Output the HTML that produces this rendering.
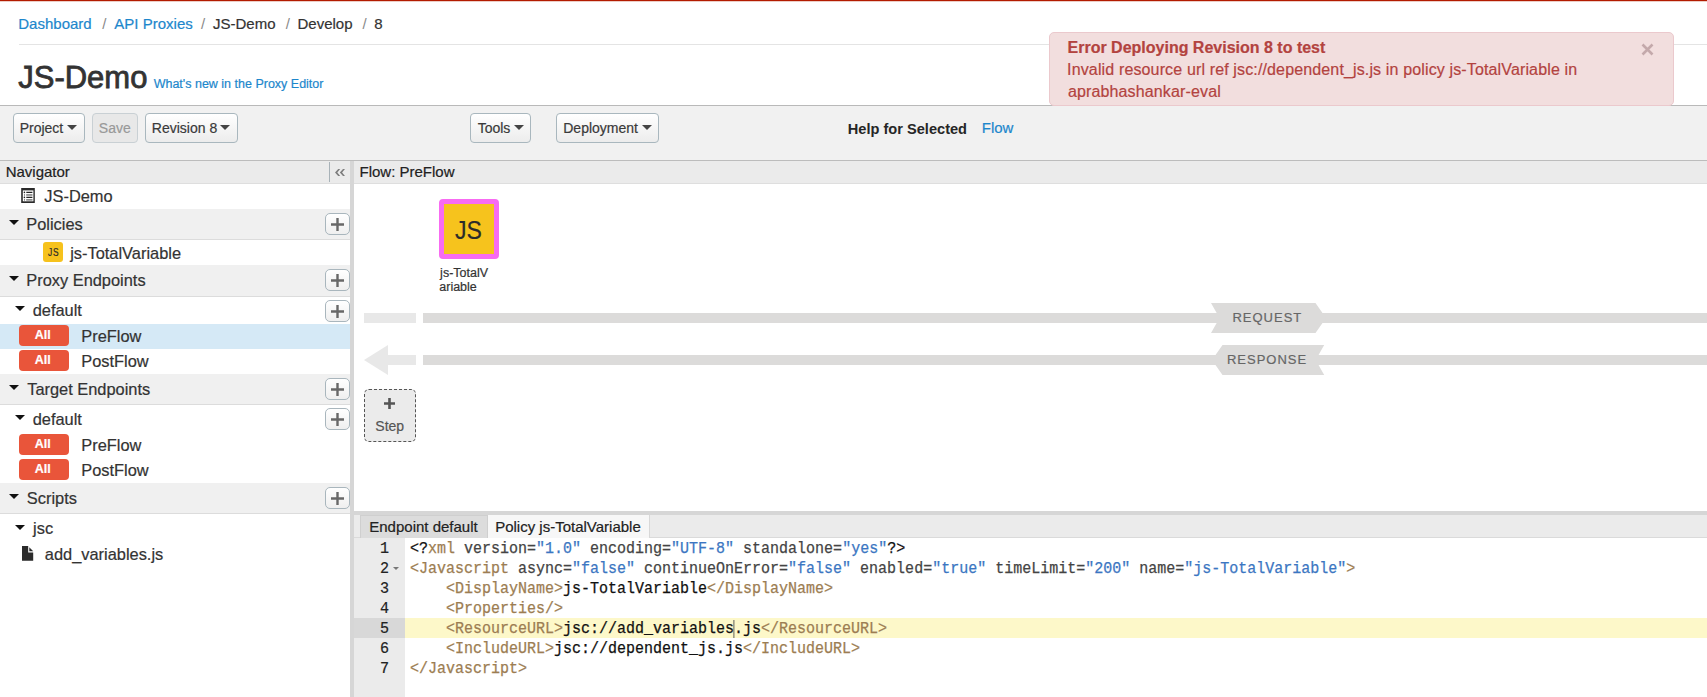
<!DOCTYPE html>
<html><head><meta charset="utf-8"><style>
html,body{margin:0;padding:0;}
body{width:1707px;height:697px;overflow:hidden;position:relative;background:#fff;font-family:"Liberation Sans",sans-serif;}
body>div,body>svg{position:absolute;white-space:pre;}
body>div{-webkit-text-stroke:0.2px;}
</style></head><body>
<div style="left:0px;top:0px;width:1707px;height:1px;background:#b31b00"></div>
<div style="left:0px;top:1px;width:1707px;height:1px;background:#eccdc6"></div>
<div style="left:18.27px;top:16px;font:400 15px/15px 'Liberation Sans', sans-serif;color:#1d87cc;">Dashboard</div>
<div style="left:102.30px;top:16px;font:400 15px/15px 'Liberation Sans', sans-serif;color:#8a8a8a;-webkit-text-stroke:0">/</div>
<div style="left:114.37px;top:16px;font:400 15px/15px 'Liberation Sans', sans-serif;color:#1d87cc;">API Proxies</div>
<div style="left:201.00px;top:16px;font:400 15px/15px 'Liberation Sans', sans-serif;color:#8a8a8a;-webkit-text-stroke:0">/</div>
<div style="left:212.97px;top:16px;font:400 15px/15px 'Liberation Sans', sans-serif;color:#333;">JS-Demo</div>
<div style="left:285.80px;top:16px;font:400 15px/15px 'Liberation Sans', sans-serif;color:#8a8a8a;-webkit-text-stroke:0">/</div>
<div style="left:297.47px;top:16px;font:400 15px/15px 'Liberation Sans', sans-serif;color:#333;">Develop</div>
<div style="left:362.50px;top:16px;font:400 15px/15px 'Liberation Sans', sans-serif;color:#8a8a8a;-webkit-text-stroke:0">/</div>
<div style="left:374.15px;top:16px;font:400 15px/15px 'Liberation Sans', sans-serif;color:#333;">8</div>
<div style="left:19px;top:44px;width:1688px;height:1px;background:#e4e4e4"></div>
<div style="left:18.22px;top:62px;font:400 31px/31px 'Liberation Sans', sans-serif;color:#333;-webkit-text-stroke:0.8px">JS-Demo</div>
<div style="left:153.65px;top:78px;font:400 12.5px/12.5px 'Liberation Sans', sans-serif;color:#1d87cc;">What&#x27;s new in the Proxy Editor</div>
<div style="left:0px;top:105px;width:1707px;height:1px;background:#b9b9b9"></div>
<div style="left:0px;top:106px;width:1707px;height:54px;background:#f1f1f1"></div>
<div style="left:0px;top:160px;width:1707px;height:1px;background:#bcbcbc"></div>
<div style="left:13px;top:113px;width:72px;height:30px;box-sizing:border-box;border:1px solid #a9b7be;border-radius:4px;background:linear-gradient(#ffffff,#ececec)"></div>
<div style="left:19.65px;top:121px;font:400 14px/14px 'Liberation Sans', sans-serif;color:#3a3a3a;">Project</div>
<div style="left:67px;top:125px;width:0;height:0;border-left:5px solid transparent;border-right:5px solid transparent;border-top:5px solid #444"></div>
<div style="left:92px;top:113px;width:46px;height:30px;box-sizing:border-box;border:1px solid #c9d0d4;border-radius:4px;background:#e8e8e8"></div>
<div style="left:98.86px;top:121px;font:400 14px/14px 'Liberation Sans', sans-serif;color:#999;">Save</div>
<div style="left:145px;top:113px;width:93px;height:30px;box-sizing:border-box;border:1px solid #a9b7be;border-radius:4px;background:linear-gradient(#ffffff,#ececec)"></div>
<div style="left:151.85px;top:121px;font:400 14px/14px 'Liberation Sans', sans-serif;color:#3a3a3a;">Revision 8</div>
<div style="left:220px;top:125px;width:0;height:0;border-left:5px solid transparent;border-right:5px solid transparent;border-top:5px solid #444"></div>
<div style="left:470px;top:113px;width:61px;height:30px;box-sizing:border-box;border:1px solid #a9b7be;border-radius:4px;background:linear-gradient(#ffffff,#ececec)"></div>
<div style="left:477.69px;top:121px;font:400 14px/14px 'Liberation Sans', sans-serif;color:#3a3a3a;">Tools</div>
<div style="left:514px;top:125px;width:0;height:0;border-left:5px solid transparent;border-right:5px solid transparent;border-top:5px solid #444"></div>
<div style="left:556px;top:113px;width:103px;height:30px;box-sizing:border-box;border:1px solid #a9b7be;border-radius:4px;background:linear-gradient(#ffffff,#ececec)"></div>
<div style="left:563.25px;top:121px;font:400 14px/14px 'Liberation Sans', sans-serif;color:#3a3a3a;">Deployment</div>
<div style="left:642px;top:125px;width:0;height:0;border-left:5px solid transparent;border-right:5px solid transparent;border-top:5px solid #444"></div>
<div style="left:847.82px;top:122px;font:700 14.6px/14.6px 'Liberation Sans', sans-serif;color:#262626;-webkit-text-stroke:0">Help for Selected</div>
<div style="left:981.77px;top:120px;font:400 15px/15px 'Liberation Sans', sans-serif;color:#1d87cc;">Flow</div>
<div style="left:1049px;top:32px;width:625px;height:74px;box-sizing:border-box;border:1px solid #ebc9cd;border-radius:5px;background:#f2dede"></div>
<div style="left:1067.53px;top:40px;font:700 16px/16px 'Liberation Sans', sans-serif;color:#b3433f;">Error Deploying Revision 8 to test</div>
<div style="left:1067.12px;top:62px;font:400 16px/16px 'Liberation Sans', sans-serif;color:#b3433f;letter-spacing:0.14px">Invalid resource url ref jsc://dependent_js.js in policy js-TotalVariable in</div>
<div style="left:1067.92px;top:84px;font:400 16px/16px 'Liberation Sans', sans-serif;color:#b3433f;letter-spacing:0.14px">aprabhashankar-eval</div>
<svg style="left:1641px;top:43px" width="13" height="13" viewBox="0 0 13 13"><path d="M1.5 1.5L11.5 11.5M11.5 1.5L1.5 11.5" stroke="#c4a9ab" stroke-width="2.6"/></svg>
<div style="left:0px;top:161px;width:350px;height:22px;background:#ebebeb"></div>
<div style="left:0px;top:183px;width:350px;height:1px;background:#dedede"></div>
<div style="left:5.67px;top:164px;font:400 15px/15px 'Liberation Sans', sans-serif;color:#222;">Navigator</div>
<div style="left:329px;top:162px;width:1px;height:20px;background:#a8b2b8"></div>
<svg style="left:335px;top:169px" width="10" height="7" viewBox="0 0 10 7"><path d="M3.2 0L0 3.5L3.2 7H5.2L2.3 3.5L5.2 0ZM8 0L4.8 3.5L8 7H10L7.1 3.5L10 0Z" fill="#7d7d7d"/></svg>
<div style="left:350px;top:161px;width:4px;height:536px;background:#d6d6d6"></div>
<svg style="left:21px;top:188px" width="14" height="15" viewBox="0 0 14 15"><rect x="0.2" y="0" width="13.6" height="15" fill="#2a2a2a"/><rect x="1.8" y="2.4" width="10.6" height="10.9" fill="#fff"/><circle cx="3.4" cy="4.4" r="0.8" fill="#222"/><path d="M5.3 4.4H11.4M5.3 9.4H11.4" stroke="#222" stroke-width="1.1"/><circle cx="3.4" cy="9.4" r="0.8" fill="#222"/><rect x="3" y="6.1" width="0.9" height="1.7" fill="#777"/><rect x="5.2" y="6.1" width="6.3" height="1.7" fill="#8a8a8a"/><rect x="3" y="11" width="0.9" height="1.7" fill="#777"/><rect x="5.2" y="11" width="6.3" height="1.7" fill="#8a8a8a"/></svg>
<div style="left:44.34px;top:188px;font:400 16.4px/16.4px 'Liberation Sans', sans-serif;color:#333;">JS-Demo</div>
<div style="left:0px;top:209px;width:350px;height:30px;background:#f0f0f0"></div>
<div style="left:0px;top:239px;width:350px;height:1px;background:#dcdcdc"></div>
<div style="left:9px;top:220px;width:0;height:0;border-left:5px solid transparent;border-right:5px solid transparent;border-top:5.5px solid #111"></div>
<div style="left:26.25px;top:216px;font:400 16.4px/16.4px 'Liberation Sans', sans-serif;color:#333;">Policies</div>
<div style="left:325px;top:213px;width:25px;height:22px;box-sizing:border-box;border:1px solid #a9b6bd;border-radius:5px;background:linear-gradient(#ffffff,#efefef)"></div>
<svg style="left:331px;top:218px" width="13" height="13" viewBox="0 0 13 13"><path d="M6.5 0V13M0 6.5H13" stroke="#686868" stroke-width="2.4"/></svg>
<div style="left:43px;top:242px;width:20px;height:20px;border-radius:3px;background:#f6c21d"></div>
<div style="left:47.74px;top:247px;font:400 10.5px/10.5px 'Liberation Sans', sans-serif;color:#2a2a2a;letter-spacing:0.9px;transform:scaleX(0.8);transform-origin:0 0">JS</div>
<div style="left:70.20px;top:245px;font:400 16.4px/16.4px 'Liberation Sans', sans-serif;color:#333;">js-TotalVariable</div>
<div style="left:0px;top:265px;width:350px;height:31px;background:#f0f0f0"></div>
<div style="left:0px;top:296px;width:350px;height:1px;background:#dcdcdc"></div>
<div style="left:9px;top:276px;width:0;height:0;border-left:5px solid transparent;border-right:5px solid transparent;border-top:5.5px solid #111"></div>
<div style="left:26.25px;top:272px;font:400 16.4px/16.4px 'Liberation Sans', sans-serif;color:#333;">Proxy Endpoints</div>
<div style="left:325px;top:269px;width:25px;height:22px;box-sizing:border-box;border:1px solid #a9b6bd;border-radius:5px;background:linear-gradient(#ffffff,#efefef)"></div>
<svg style="left:331px;top:274px" width="13" height="13" viewBox="0 0 13 13"><path d="M6.5 0V13M0 6.5H13" stroke="#686868" stroke-width="2.4"/></svg>
<div style="left:15px;top:306px;width:0;height:0;border-left:5px solid transparent;border-right:5px solid transparent;border-top:5.5px solid #111"></div>
<div style="left:32.71px;top:302px;font:400 16.4px/16.4px 'Liberation Sans', sans-serif;color:#333;">default</div>
<div style="left:325px;top:299.5px;width:25px;height:22px;box-sizing:border-box;border:1px solid #a9b6bd;border-radius:5px;background:linear-gradient(#ffffff,#efefef)"></div>
<svg style="left:331px;top:304.5px" width="13" height="13" viewBox="0 0 13 13"><path d="M6.5 0V13M0 6.5H13" stroke="#686868" stroke-width="2.4"/></svg>
<div style="left:0px;top:324px;width:350px;height:25px;background:#d5e9f6"></div>
<div style="left:19px;top:325px;width:50px;height:20.5px;border-radius:4px;background:#e9553a"></div>
<div style="left:34.69px;top:329px;font:700 12.5px/12.5px 'Liberation Sans', sans-serif;color:#fff;">All</div>
<div style="left:81.25px;top:328px;font:400 16.4px/16.4px 'Liberation Sans', sans-serif;color:#333;">PreFlow</div>
<div style="left:19px;top:350px;width:50px;height:20.5px;border-radius:4px;background:#e9553a"></div>
<div style="left:34.69px;top:354px;font:700 12.5px/12.5px 'Liberation Sans', sans-serif;color:#fff;">All</div>
<div style="left:81.25px;top:353px;font:400 16.4px/16.4px 'Liberation Sans', sans-serif;color:#333;">PostFlow</div>
<div style="left:0px;top:374px;width:350px;height:30px;background:#f0f0f0"></div>
<div style="left:0px;top:404px;width:350px;height:1px;background:#dcdcdc"></div>
<div style="left:9px;top:384.5px;width:0;height:0;border-left:5px solid transparent;border-right:5px solid transparent;border-top:5.5px solid #111"></div>
<div style="left:27.23px;top:381px;font:400 16.4px/16.4px 'Liberation Sans', sans-serif;color:#333;">Target Endpoints</div>
<div style="left:325px;top:378px;width:25px;height:22px;box-sizing:border-box;border:1px solid #a9b6bd;border-radius:5px;background:linear-gradient(#ffffff,#efefef)"></div>
<svg style="left:331px;top:383px" width="13" height="13" viewBox="0 0 13 13"><path d="M6.5 0V13M0 6.5H13" stroke="#686868" stroke-width="2.4"/></svg>
<div style="left:15px;top:415px;width:0;height:0;border-left:5px solid transparent;border-right:5px solid transparent;border-top:5.5px solid #111"></div>
<div style="left:32.71px;top:411px;font:400 16.4px/16.4px 'Liberation Sans', sans-serif;color:#333;">default</div>
<div style="left:325px;top:408px;width:25px;height:22px;box-sizing:border-box;border:1px solid #a9b6bd;border-radius:5px;background:linear-gradient(#ffffff,#efefef)"></div>
<svg style="left:331px;top:413px" width="13" height="13" viewBox="0 0 13 13"><path d="M6.5 0V13M0 6.5H13" stroke="#686868" stroke-width="2.4"/></svg>
<div style="left:19px;top:434px;width:50px;height:20.5px;border-radius:4px;background:#e9553a"></div>
<div style="left:34.69px;top:438px;font:700 12.5px/12.5px 'Liberation Sans', sans-serif;color:#fff;">All</div>
<div style="left:81.25px;top:437px;font:400 16.4px/16.4px 'Liberation Sans', sans-serif;color:#333;">PreFlow</div>
<div style="left:19px;top:459px;width:50px;height:20.5px;border-radius:4px;background:#e9553a"></div>
<div style="left:34.69px;top:463px;font:700 12.5px/12.5px 'Liberation Sans', sans-serif;color:#fff;">All</div>
<div style="left:81.25px;top:462px;font:400 16.4px/16.4px 'Liberation Sans', sans-serif;color:#333;">PostFlow</div>
<div style="left:0px;top:483px;width:350px;height:30px;background:#f0f0f0"></div>
<div style="left:0px;top:513px;width:350px;height:1px;background:#dcdcdc"></div>
<div style="left:9px;top:494px;width:0;height:0;border-left:5px solid transparent;border-right:5px solid transparent;border-top:5.5px solid #111"></div>
<div style="left:26.86px;top:490px;font:400 16.4px/16.4px 'Liberation Sans', sans-serif;color:#333;">Scripts</div>
<div style="left:325px;top:487px;width:25px;height:22px;box-sizing:border-box;border:1px solid #a9b6bd;border-radius:5px;background:linear-gradient(#ffffff,#efefef)"></div>
<svg style="left:331px;top:492px" width="13" height="13" viewBox="0 0 13 13"><path d="M6.5 0V13M0 6.5H13" stroke="#686868" stroke-width="2.4"/></svg>
<div style="left:15px;top:524.5px;width:0;height:0;border-left:5px solid transparent;border-right:5px solid transparent;border-top:5.5px solid #111"></div>
<div style="left:33.10px;top:520px;font:400 16.4px/16.4px 'Liberation Sans', sans-serif;color:#333;">jsc</div>
<svg style="left:21.5px;top:546px" width="12" height="15" viewBox="0 0 12 15"><path d="M0 0H6.2V6.4H11.2V14.8H0Z" fill="#2b2b2b"/><path d="M7.3 1.3L11.2 5.2H7.3Z" fill="#2b2b2b"/></svg>
<div style="left:44.80px;top:546px;font:400 16.4px/16.4px 'Liberation Sans', sans-serif;color:#333;">add_variables.js</div>
<div style="left:354px;top:161px;width:1353px;height:22px;background:#ebebeb"></div>
<div style="left:354px;top:183px;width:1353px;height:1px;background:#dedede"></div>
<div style="left:359.47px;top:164px;font:400 15px/15px 'Liberation Sans', sans-serif;color:#222;">Flow: PreFlow</div>
<div style="left:439px;top:199px;width:60px;height:60px;box-sizing:border-box;border:5px solid #f86bf2;border-radius:4px;background:#f6c31d"></div>
<div style="left:455.11px;top:218px;font:400 25px/25px 'Liberation Sans', sans-serif;color:#2b2b2b;transform:scaleX(0.92);transform-origin:0 0">JS</div>
<div style="left:440.11px;top:267px;font:400 12.5px/12.5px 'Liberation Sans', sans-serif;color:#333;">js-TotalV</div>
<div style="left:439.27px;top:281px;font:400 12.5px/12.5px 'Liberation Sans', sans-serif;color:#333;">ariable</div>
<div style="left:364px;top:313px;width:52px;height:10px;background:#e8e8e8"></div>
<div style="left:423px;top:313px;width:1284px;height:10px;background:#dcdbda"></div>
<svg style="left:1211px;top:303px" width="116" height="30" viewBox="0 0 116 30"><path d="M0 0H104.5L115 15L104.5 30H0L8.5 15Z" fill="#dcdbda"/></svg>
<div style="left:1232.43px;top:311px;font:400 13px/13px 'Liberation Sans', sans-serif;color:#666;letter-spacing:1px">REQUEST</div>
<svg style="left:364px;top:345px" width="52" height="30" viewBox="0 0 52 30"><path d="M0 15L24 0V10H52V20H24V30Z" fill="#e8e8e8"/></svg>
<div style="left:423px;top:355px;width:1284px;height:10px;background:#dcdbda"></div>
<svg style="left:1211.5px;top:345px" width="113" height="30" viewBox="0 0 113 30"><path d="M10.5 0H112.2L103.7 15L112.2 30H10.5L0 15Z" fill="#dcdbda"/></svg>
<div style="left:1226.93px;top:353px;font:400 13px/13px 'Liberation Sans', sans-serif;color:#666;letter-spacing:1px">RESPONSE</div>
<div style="left:364px;top:389px;width:52px;height:53px;box-sizing:border-box;border:1px dashed #555;border-radius:5px;background:#ebebeb"></div>
<svg style="left:383.5px;top:398px" width="11" height="11" viewBox="0 0 11 11"><path d="M5.5 0V11M0 5.5H11" stroke="#555" stroke-width="2.6"/></svg>
<div style="left:375.36px;top:419px;font:400 14px/14px 'Liberation Sans', sans-serif;color:#555;">Step</div>
<div style="left:354px;top:511px;width:1353px;height:4px;background:#d6d6d6"></div>
<div style="left:354px;top:515px;width:1353px;height:23px;background:#ebebeb"></div>
<div style="left:354px;top:537px;width:1353px;height:1px;background:#dadada"></div>
<div style="left:360px;top:515px;width:128px;height:23px;box-sizing:border-box;border:1px solid #cfcfcf;border-bottom:none;background:#dcdcdc"></div>
<div style="left:488px;top:515px;width:162px;height:23px;box-sizing:border-box;border-right:1px solid #d8d8d8;background:#f7f7f7"></div>
<div style="left:369.27px;top:519px;font:400 15px/15px 'Liberation Sans', sans-serif;color:#222;">Endpoint default</div>
<div style="left:495.17px;top:519px;font:400 15px/15px 'Liberation Sans', sans-serif;color:#222;">Policy js-TotalVariable</div>
<div style="left:354px;top:538px;width:51px;height:159px;background:#ebebeb"></div>
<div style="left:405px;top:538px;width:1302px;height:159px;background:#fff"></div>
<div style="left:354px;top:618px;width:51px;height:20px;background:#d8d8d8"></div>
<div style="left:405px;top:618px;width:1302px;height:20px;background:#fdf8c9"></div>
<div style="left:410.25px;top:541px;font:16px/16px 'Liberation Mono', monospace;white-space:pre;color:#111;-webkit-text-stroke:0.25px;transform:scaleX(0.9375);transform-origin:0 0"><span style="color:#111">&lt;?</span><span style="color:#9c7d52">xml</span> <span style="color:#444">version=</span><span style="color:#3b76c2">&quot;1.0&quot;</span> <span style="color:#444">encoding=</span><span style="color:#3b76c2">&quot;UTF-8&quot;</span> <span style="color:#444">standalone=</span><span style="color:#3b76c2">&quot;yes&quot;</span><span style="color:#111">?&gt;</span></div>
<div style="left:360px;width:29px;text-align:right;top:541px;font:16px/16px 'Liberation Mono', monospace;color:#222;transform:scaleX(0.94);transform-origin:100% 0">1</div>
<div style="left:410.25px;top:561px;font:16px/16px 'Liberation Mono', monospace;white-space:pre;color:#111;-webkit-text-stroke:0.25px;transform:scaleX(0.9375);transform-origin:0 0"><span style="color:#9c7d52">&lt;Javascript</span> <span style="color:#444">async=</span><span style="color:#3b76c2">&quot;false&quot;</span> <span style="color:#444">continueOnError=</span><span style="color:#3b76c2">&quot;false&quot;</span> <span style="color:#444">enabled=</span><span style="color:#3b76c2">&quot;true&quot;</span> <span style="color:#444">timeLimit=</span><span style="color:#3b76c2">&quot;200&quot;</span> <span style="color:#444">name=</span><span style="color:#3b76c2">&quot;js-TotalVariable&quot;</span><span style="color:#9c7d52">&gt;</span></div>
<div style="left:360px;width:29px;text-align:right;top:561px;font:16px/16px 'Liberation Mono', monospace;color:#222;transform:scaleX(0.94);transform-origin:100% 0">2</div>
<div style="left:410.25px;top:581px;font:16px/16px 'Liberation Mono', monospace;white-space:pre;color:#111;-webkit-text-stroke:0.25px;transform:scaleX(0.9375);transform-origin:0 0">    <span style="color:#9c7d52">&lt;DisplayName&gt;</span><span style="color:#111">js-TotalVariable</span><span style="color:#9c7d52">&lt;/DisplayName&gt;</span></div>
<div style="left:360px;width:29px;text-align:right;top:581px;font:16px/16px 'Liberation Mono', monospace;color:#222;transform:scaleX(0.94);transform-origin:100% 0">3</div>
<div style="left:410.25px;top:601px;font:16px/16px 'Liberation Mono', monospace;white-space:pre;color:#111;-webkit-text-stroke:0.25px;transform:scaleX(0.9375);transform-origin:0 0">    <span style="color:#9c7d52">&lt;Properties/&gt;</span></div>
<div style="left:360px;width:29px;text-align:right;top:601px;font:16px/16px 'Liberation Mono', monospace;color:#222;transform:scaleX(0.94);transform-origin:100% 0">4</div>
<div style="left:410.25px;top:621px;font:16px/16px 'Liberation Mono', monospace;white-space:pre;color:#111;-webkit-text-stroke:0.25px;transform:scaleX(0.9375);transform-origin:0 0">    <span style="color:#9c7d52">&lt;ResourceURL&gt;</span><span style="color:#111">jsc://add_variables</span><span style="border-left:1px solid #555;margin-left:-0.5px;margin-right:-0.5px"></span><span style="color:#111">.js</span><span style="color:#9c7d52">&lt;/ResourceURL&gt;</span></div>
<div style="left:360px;width:29px;text-align:right;top:621px;font:16px/16px 'Liberation Mono', monospace;color:#222;transform:scaleX(0.94);transform-origin:100% 0">5</div>
<div style="left:410.25px;top:641px;font:16px/16px 'Liberation Mono', monospace;white-space:pre;color:#111;-webkit-text-stroke:0.25px;transform:scaleX(0.9375);transform-origin:0 0">    <span style="color:#9c7d52">&lt;IncludeURL&gt;</span><span style="color:#111">jsc://dependent_js.js</span><span style="color:#9c7d52">&lt;/IncludeURL&gt;</span></div>
<div style="left:360px;width:29px;text-align:right;top:641px;font:16px/16px 'Liberation Mono', monospace;color:#222;transform:scaleX(0.94);transform-origin:100% 0">6</div>
<div style="left:410.25px;top:661px;font:16px/16px 'Liberation Mono', monospace;white-space:pre;color:#111;-webkit-text-stroke:0.25px;transform:scaleX(0.9375);transform-origin:0 0"><span style="color:#9c7d52">&lt;/Javascript&gt;</span></div>
<div style="left:360px;width:29px;text-align:right;top:661px;font:16px/16px 'Liberation Mono', monospace;color:#222;transform:scaleX(0.94);transform-origin:100% 0">7</div>
<div style="left:393px;top:566.5px;width:0;height:0;border-left:3.5px solid transparent;border-right:3.5px solid transparent;border-top:3.5px solid #777"></div>
</body></html>
